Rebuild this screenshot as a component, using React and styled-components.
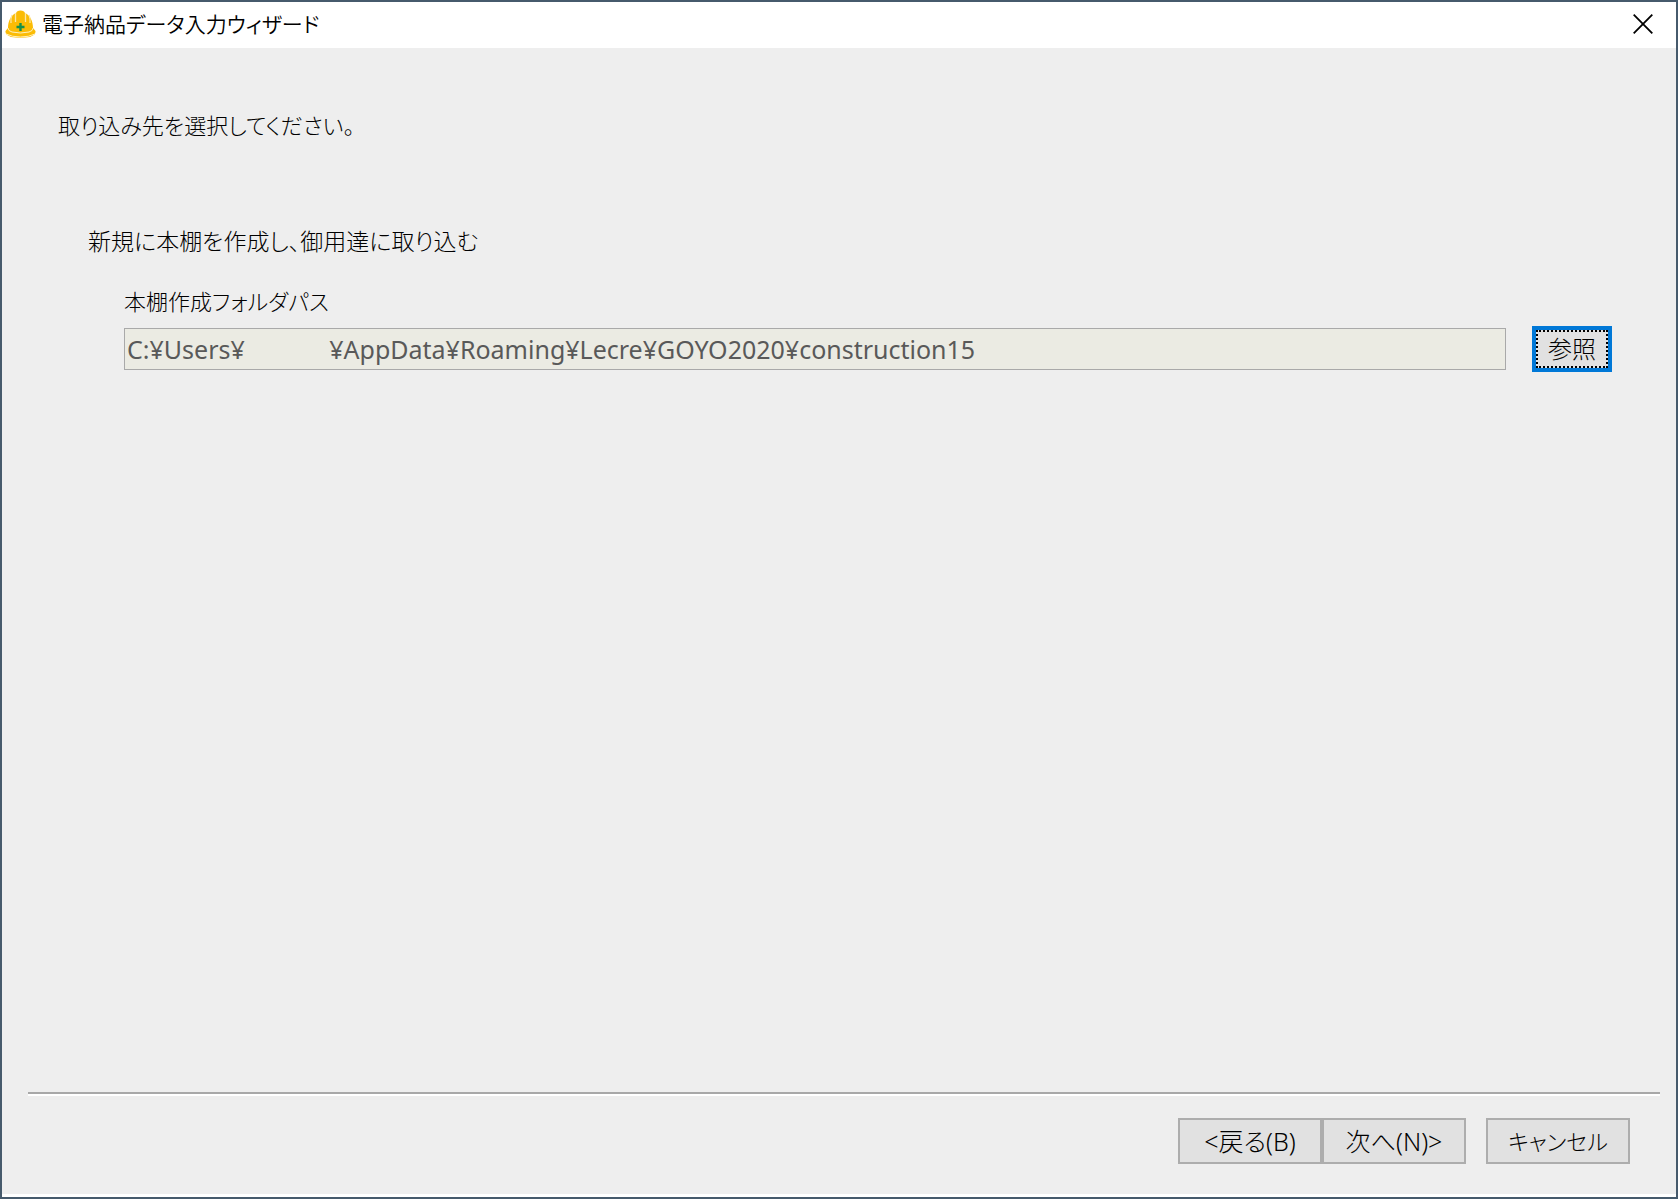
import React, { useState } from "react";
import styled, { createGlobalStyle } from "styled-components";

const GlobalStyle = createGlobalStyle`
  *, *::before, *::after { box-sizing: border-box; }
  body { margin: 0; }
  body, button, input {
    font-family: "Noto Sans", "Noto Sans CJK JP", sans-serif;
    font-size: 22px;
    font-feature-settings: "palt";
    color: #000;
  }
`;

const Window = styled.div`
  display: flex;
  flex-direction: column;
  min-height: 100vh;
  border: 2px solid #465a6c;
  background: #fff;
  padding-bottom: 3px;
`;

const TitleBar = styled.header`
  display: flex;
  align-items: center;
  height: 46px;
  padding: 0 0 2px 3px;
  background: #fff;
`;

const Title = styled.h1`
  flex: 1;
  margin: 0 0 0 6px;
  font-size: 21px;
  font-weight: 350;
  line-height: 32px;
`;

const CloseButton = styled.button`
  display: flex;
  align-items: center;
  justify-content: center;
  align-self: stretch;
  width: 66px;
  padding: 0;
  border: 0;
  background: transparent;
`;

const Page = styled.form`
  flex: 1;
  display: flex;
  flex-direction: column;
  background: #eee;
`;

const Content = styled.main`
  flex: 1;
  padding: 61px 64px 0 56px;
`;

const Prompt = styled.p`
  margin: 0;
  font-weight: 300;
  line-height: 32px;
`;

const Destination = styled.section`
  margin-top: 84px;
  padding-left: 30px;
`;

const Heading = styled.h2`
  margin: 0;
  font-size: 23px;
  font-weight: 300;
  line-height: 32px;
`;

const Field = styled.div`
  margin-top: 28px;
  padding-left: 36px;
`;

const FieldLabel = styled.label`
  display: block;
  font-size: 22px;
  font-weight: 300;
  line-height: 32px;
`;

const FieldRow = styled.div`
  display: flex;
  align-items: center;
  gap: 26px;
  margin-top: 9px;
`;

const PathInput = styled.input`
  flex: 1;
  min-width: 0;
  height: 42px;
  padding: 0 2px;
  border: 1px solid #a9a9a9;
  border-radius: 0;
  background: #ebebe3;
  color: #595959;
  font-size: 25px;
  outline: 0;
`;

const Button = styled.button`
  width: 144px;
  height: 46px;
  padding: 0;
  border: 2px solid #adadad;
  border-radius: 0;
  background: #e1e1e1;
  font-size: ${(props) => (props.$compact ? "22px" : "25px")};
  font-weight: 300;
  line-height: 32px;
`;

const BrowseButton = styled(Button)`
  width: 80px;
  border: 4px solid #0078d7;
  font-size: 24px;
`;

const FocusFrame = styled.span`
  display: flex;
  align-items: center;
  justify-content: center;
  height: 38px;
  border: 2px dotted #000;
`;

const Divider = styled.hr`
  width: auto;
  height: 4px;
  margin: 0 16px 0 26px;
  border: 0;
  border-top: 2px solid #a8a8a8;
  border-bottom: 2px solid #fff;
`;

const Footer = styled.footer`
  display: flex;
  justify-content: flex-end;
  gap: 20px;
  padding: 22px 46px 30px;
`;

const StepButtons = styled.div`
  display: flex;
`;

function HelmetIcon() {
  return (
    <svg width="31" height="28" viewBox="0 0 31 28" aria-hidden="true">
      <path d="M3 18C3 11 6 5 11 3L12 1.500Q15.500 -.5 19 1.500L20 3C25 5 28 11 28 18L30.500 21Q31 25 25 27Q15.500 28.500 6 27Q0 25 .5 21Z" fill="#fbbc05" />
      <path d="M10.500 3V12M20.500 3V12M7 5Q5.500 8 6 13M24 5Q25.500 8 25 13" fill="none" stroke="#fde7a5" strokeWidth="1.300" />
      <path d="M3 18Q3 21 7 22Q15.500 24 24 22Q28 21 28 18M1 24Q7 27 15.500 27T30 24" fill="none" stroke="#fff0bd" strokeWidth="1" />
      <path d="M15.500 13V21M11.500 17H19.500" fill="none" stroke="#17904a" strokeWidth="2.400" />
    </svg>
  );
}

function CloseIcon() {
  return (
    <svg width="20" height="20" viewBox="0 0 20 20" aria-hidden="true">
      <path d="M.7 .7L19.300 19.300M19.300 .7L.7 19.300" stroke="#000" strokeWidth="1.800" />
    </svg>
  );
}

export default function App() {
  const [path] = useState(
    "C:¥Users¥" + " ".repeat(13) + "¥AppData¥Roaming¥Lecre¥GOYO2020¥construction15"
  );

  return (
    <Window lang="ja">
      <GlobalStyle />
      <TitleBar>
        <HelmetIcon />
        <Title>電子納品データ入力ウィザード</Title>
        <CloseButton type="button" aria-label="閉じる">
          <CloseIcon />
        </CloseButton>
      </TitleBar>
      <Page onSubmit={(event) => event.preventDefault()}>
        <Content>
          <Prompt>取り込み先を選択してください。</Prompt>
          <Destination>
            <Heading>新規に本棚を作成し、御用達に取り込む</Heading>
            <Field>
              <FieldLabel htmlFor="folder-path">本棚作成フォルダパス</FieldLabel>
              <FieldRow>
                <PathInput id="folder-path" type="text" value={path} readOnly />
                <BrowseButton type="button">
                  <FocusFrame>参照</FocusFrame>
                </BrowseButton>
              </FieldRow>
            </Field>
          </Destination>
        </Content>
        <Divider />
        <Footer>
          <StepButtons>
            <Button type="button">&lt;戻る(B)</Button>
            <Button type="submit">次へ(N)&gt;</Button>
          </StepButtons>
          <Button type="button" $compact>キャンセル</Button>
        </Footer>
      </Page>
    </Window>
  );
}
